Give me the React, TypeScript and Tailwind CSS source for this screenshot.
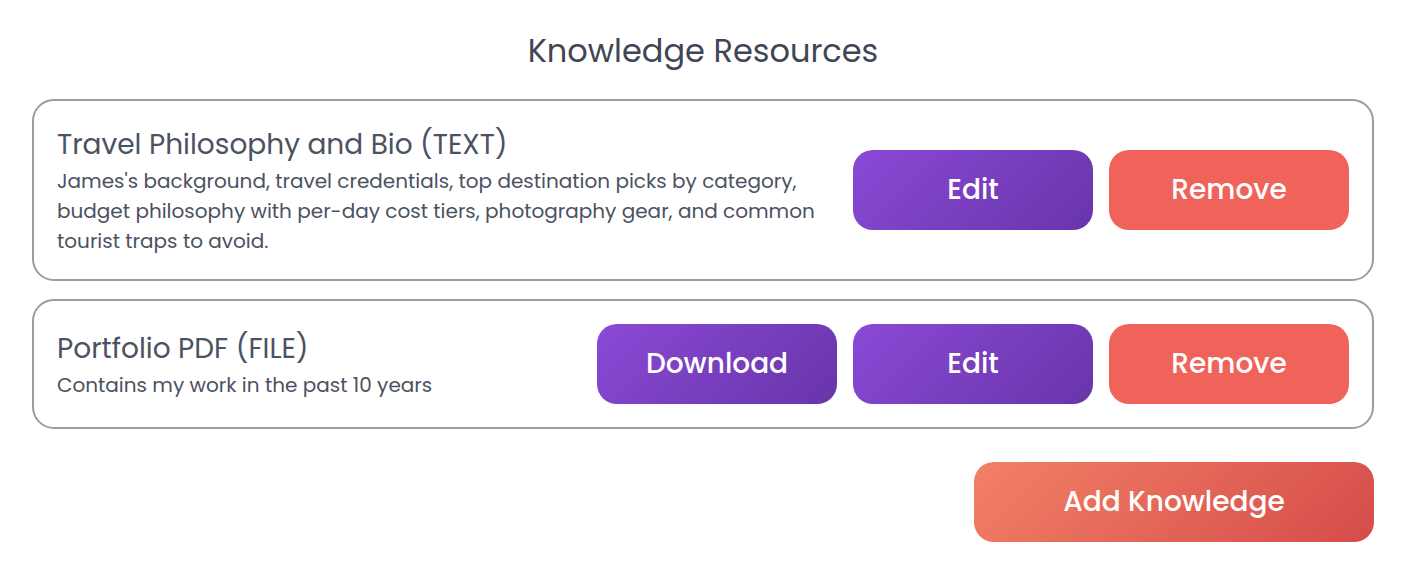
import React from 'react';

type Resource = {
  title: string;
  description: string;
  downloadable?: boolean;
};

const resources: Resource[] = [
  {
    title: 'Travel Philosophy and Bio (TEXT)',
    description:
      "James's background, travel credentials, top destination picks by category, budget philosophy with per-day cost tiers, photography gear, and common tourist traps to avoid.",
  },
  {
    title: 'Portfolio PDF (FILE)',
    description: 'Contains my work in the past 10 years',
    downloadable: true,
  },
];

const purpleBtn =
  'w-[240px] h-[80px] rounded-[20px] bg-linear-135 from-[#8b49d6] to-[#6835aa] text-white text-[28px] font-medium flex items-center justify-center shrink-0';
const redBtn =
  'w-[240px] h-[80px] rounded-[20px] bg-[#ef635a] text-white text-[28px] font-medium flex items-center justify-center shrink-0';

function ResourceCard({ item }: { item: Resource }) {
  return (
    <div className="flex items-center gap-6 rounded-[22px] border-2 border-[#979ca7] bg-white p-[23px]">
      <div className="flex-1 min-w-0">
        <h3 className="text-[28px] leading-[42px] text-[#4b5261]">{item.title}</h3>
        <p className="text-[20px] leading-[30px] text-[#4b5261]">{item.description}</p>
      </div>
      <div className="flex gap-4">
        {item.downloadable && <button className={purpleBtn}>Download</button>}
        <button className={purpleBtn}>Edit</button>
        <button className={redBtn}>Remove</button>
      </div>
    </div>
  );
}

export default function App() {
  return (
    <div
      className="min-h-screen bg-white pl-8 pr-[37px] pt-[27px]"
      style={{ fontFamily: '"Poppins", "Open Sans", "Noto Sans", sans-serif' }}
    >
      <h2 className="text-center text-[32px] leading-[48px] text-[#3f4654]">Knowledge Resources</h2>
      <div className="mt-[24px] flex flex-col gap-[18px]">
        {resources.map((r) => (
          <ResourceCard key={r.title} item={r} />
        ))}
      </div>
      <div className="mt-[33px] flex justify-end">
        <button className="w-[400px] h-[80px] rounded-[20px] bg-linear-135 from-[#f28066] to-[#d54b4a] text-white text-[28px] font-medium">
          Add Knowledge
        </button>
      </div>
    </div>
  );
}
